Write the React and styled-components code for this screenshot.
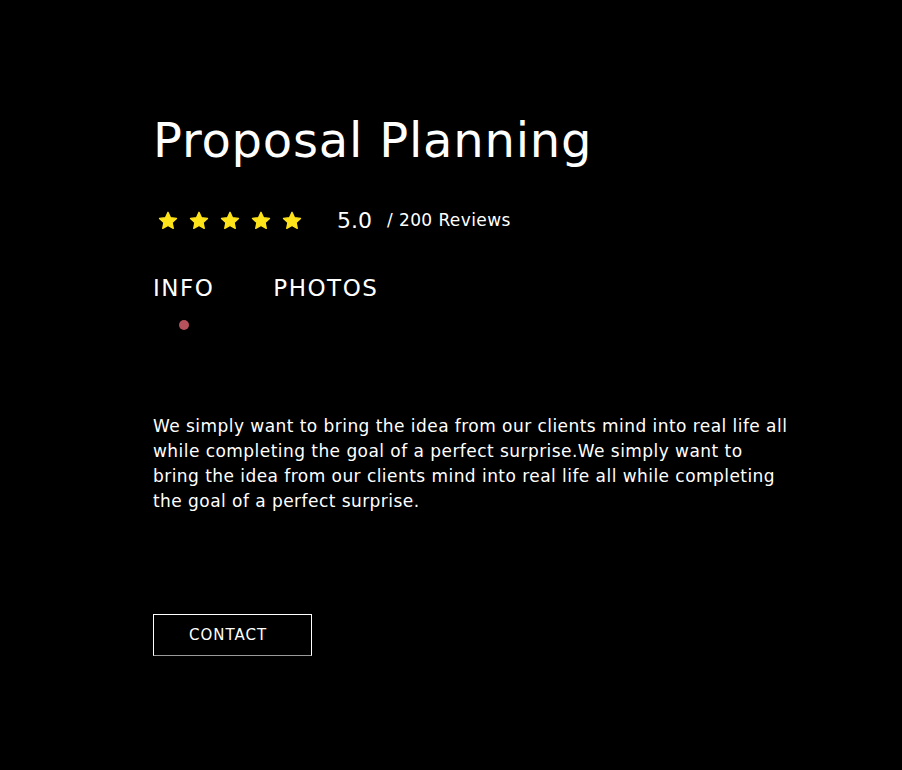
import React from "react";
import styled, { createGlobalStyle } from "styled-components";

const Global = createGlobalStyle`
  html, body { margin: 0; padding: 0; background: #000; }
  body { font-family: "DejaVu Sans", "Open Sans", sans-serif; color: #fff; }
`;

const Page = styled.main`
  min-height: 770px;
  background: #000;
  padding: 108px 0 0 153px;
  box-sizing: border-box;
`;

const Title = styled.h1`
  margin: 0;
  font-size: 48px;
  font-weight: 400;
  line-height: 64px;
  letter-spacing: 0.8px;
`;

const RatingRow = styled.div`
  display: flex;
  align-items: center;
  margin-top: 33px;
  height: 30px;
`;

const Stars = styled.div`
  display: flex;
  gap: 11px;
  margin-left: 5px;
`;

const Score = styled.span`
  font-size: 22px;
  margin-left: 35px;
`;

const Reviews = styled.span`
  font-size: 17px;
  margin-left: 15px;
  letter-spacing: 0.4px;
`;

const Tabs = styled.nav`
  display: flex;
  gap: 59px;
  margin-top: 39px;
`;

const Tab = styled.div`
  display: flex;
  flex-direction: column;
  align-items: center;
  font-size: 23px;
  line-height: 28px;
  letter-spacing: 1.5px;
  text-transform: uppercase;
`;

const Dot = styled.span`
  width: 10px;
  height: 10px;
  border-radius: 50%;
  margin-top: 18px;
  background: ${(p) => (p.$active ? "#b6525b" : "transparent")};
`;

const Body = styled.p`
  margin: 84px 0 0;
  width: 638px;
  font-size: 17px;
  line-height: 25px;
  letter-spacing: 0.45px;
`;

const Button = styled.button`
  margin-top: 100px;
  width: 159px;
  height: 42px;
  background: #000;
  color: #fff;
  border: 1px solid #fff;
  border-bottom-color: #9a9a9a;
  font-family: inherit;
  font-size: 15px;
  letter-spacing: 1px;
  text-align: left;
  padding: 0 0 0 35px;
  cursor: pointer;
`;

const Star = () => (
  <svg width="20" height="19" viewBox="0 0 24 23" aria-hidden="true">
    <path
      d="M12 1.5l3.1 6.6 7.2.9-5.3 5 1.4 7.1L12 17.6l-6.4 3.5 1.4-7.1-5.3-5 7.2-.9z"
      fill="#ffe31a"
      stroke="#ffe31a"
      strokeWidth="1.6"
      strokeLinejoin="round"
    />
  </svg>
);

export default function App() {
  return (
    <>
      <Global />
      <Page>
        <Title>Proposal Planning</Title>
        <RatingRow>
          <Stars>
            {[0, 1, 2, 3, 4].map((i) => (
              <Star key={i} />
            ))}
          </Stars>
          <Score>5.0</Score>
          <Reviews>/ 200 Reviews</Reviews>
        </RatingRow>
        <Tabs>
          <Tab>
            INFO
            <Dot $active />
          </Tab>
          <Tab>
            PHOTOS
            <Dot />
          </Tab>
        </Tabs>
        <Body>
          We simply want to bring the idea from our clients mind into real life
          all while completing the goal of a perfect surprise.We simply want to
          bring the idea from our clients mind into real life all while
          completing the goal of a perfect surprise.
        </Body>
        <Button>CONTACT</Button>
      </Page>
    </>
  );
}
